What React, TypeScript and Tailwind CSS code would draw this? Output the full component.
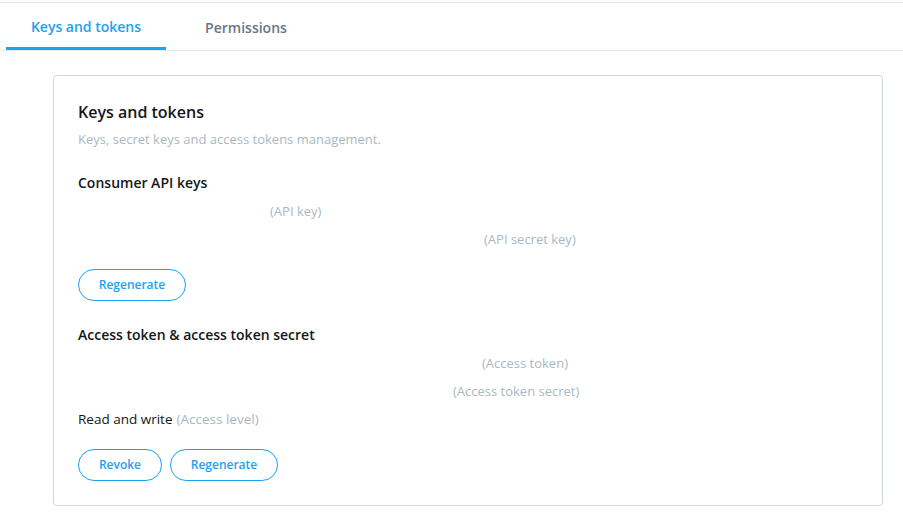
import React from 'react'

const font = { fontFamily: '"Open Sans", "Noto Sans", sans-serif' }

interface KeyRowProps {
  width: string
  label: string
}

const KeyRow: React.FC<KeyRowProps> = ({ width, label }) => (
  <div className="h-[28px] flex items-center text-[13px]">
    {/* secret value is rendered white on white */}
    <span className={`inline-block ${width} h-[18px] text-white overflow-hidden`}>••••••••</span>
    <span className="ml-[4px] text-[#aab8c2]">({label})</span>
  </div>
)

const PillButton: React.FC<{ children: React.ReactNode; width: string }> = ({ children, width }) => (
  <button
    className={`${width} h-[32px] rounded-full border border-[#1da1f2] text-[#1da1f2] text-[12px] font-semibold bg-white flex items-center justify-center`}
  >
    {children}
  </button>
)

export default function App() {
  return (
    <div className="w-[903px] h-[523px] bg-white" style={font}>
      {/* tab bar */}
      <div className="pt-[2px]">
        <div className="border-t border-b border-[#e6ecf0] h-[49px] flex">
          <div className="ml-[6px] w-[160px] flex items-center justify-center border-b-[3px] border-[#1da1f2] pt-[2px] text-[14px] font-semibold text-[#1da1f2]">
            Keys and tokens
          </div>
          <div className="w-[160px] flex items-center justify-center pt-[2px] text-[14px] font-semibold text-[#657786]">
            Permissions
          </div>
        </div>
      </div>

      {/* card */}
      <div className="ml-[53px] mt-[24px] w-[830px] h-[431px] border border-[#ccd6dd] rounded-[4px] px-[24px] pt-[24px]">
        <h2 className="text-[16px] font-semibold text-[#14171a] leading-[24px]">Keys and tokens</h2>
        <p className="mt-[6px] text-[13px] text-[#aab8c2] leading-[18px]">
          Keys, secret keys and access tokens management.
        </p>

        <h3 className="mt-[25px] text-[14px] font-semibold text-[#14171a] leading-[20px]">Consumer API keys</h3>
        <div className="mt-[5px]">
          <KeyRow width="w-[188px]" label="API key" />
          <KeyRow width="w-[402px]" label="API secret key" />
        </div>
        <div className="mt-[15px] flex">
          <PillButton width="w-[108px]">Regenerate</PillButton>
        </div>

        <h3 className="mt-[24px] text-[14px] font-semibold text-[#14171a] leading-[20px]">
          Access token &amp; access token secret
        </h3>
        <div className="mt-[5px]">
          <KeyRow width="w-[400px]" label="Access token" />
          <KeyRow width="w-[371px]" label="Access token secret" />
          <div className="h-[28px] flex items-center text-[13.5px] pb-[2px]">
            <span className="text-[#14171a]">Read and write</span>
            <span className="ml-[4px] text-[#aab8c2]">(Access level)</span>
          </div>
        </div>
        <div className="mt-[15px] flex gap-[8px]">
          <PillButton width="w-[84px]">Revoke</PillButton>
          <PillButton width="w-[108px]">Regenerate</PillButton>
        </div>
      </div>
    </div>
  )
}
